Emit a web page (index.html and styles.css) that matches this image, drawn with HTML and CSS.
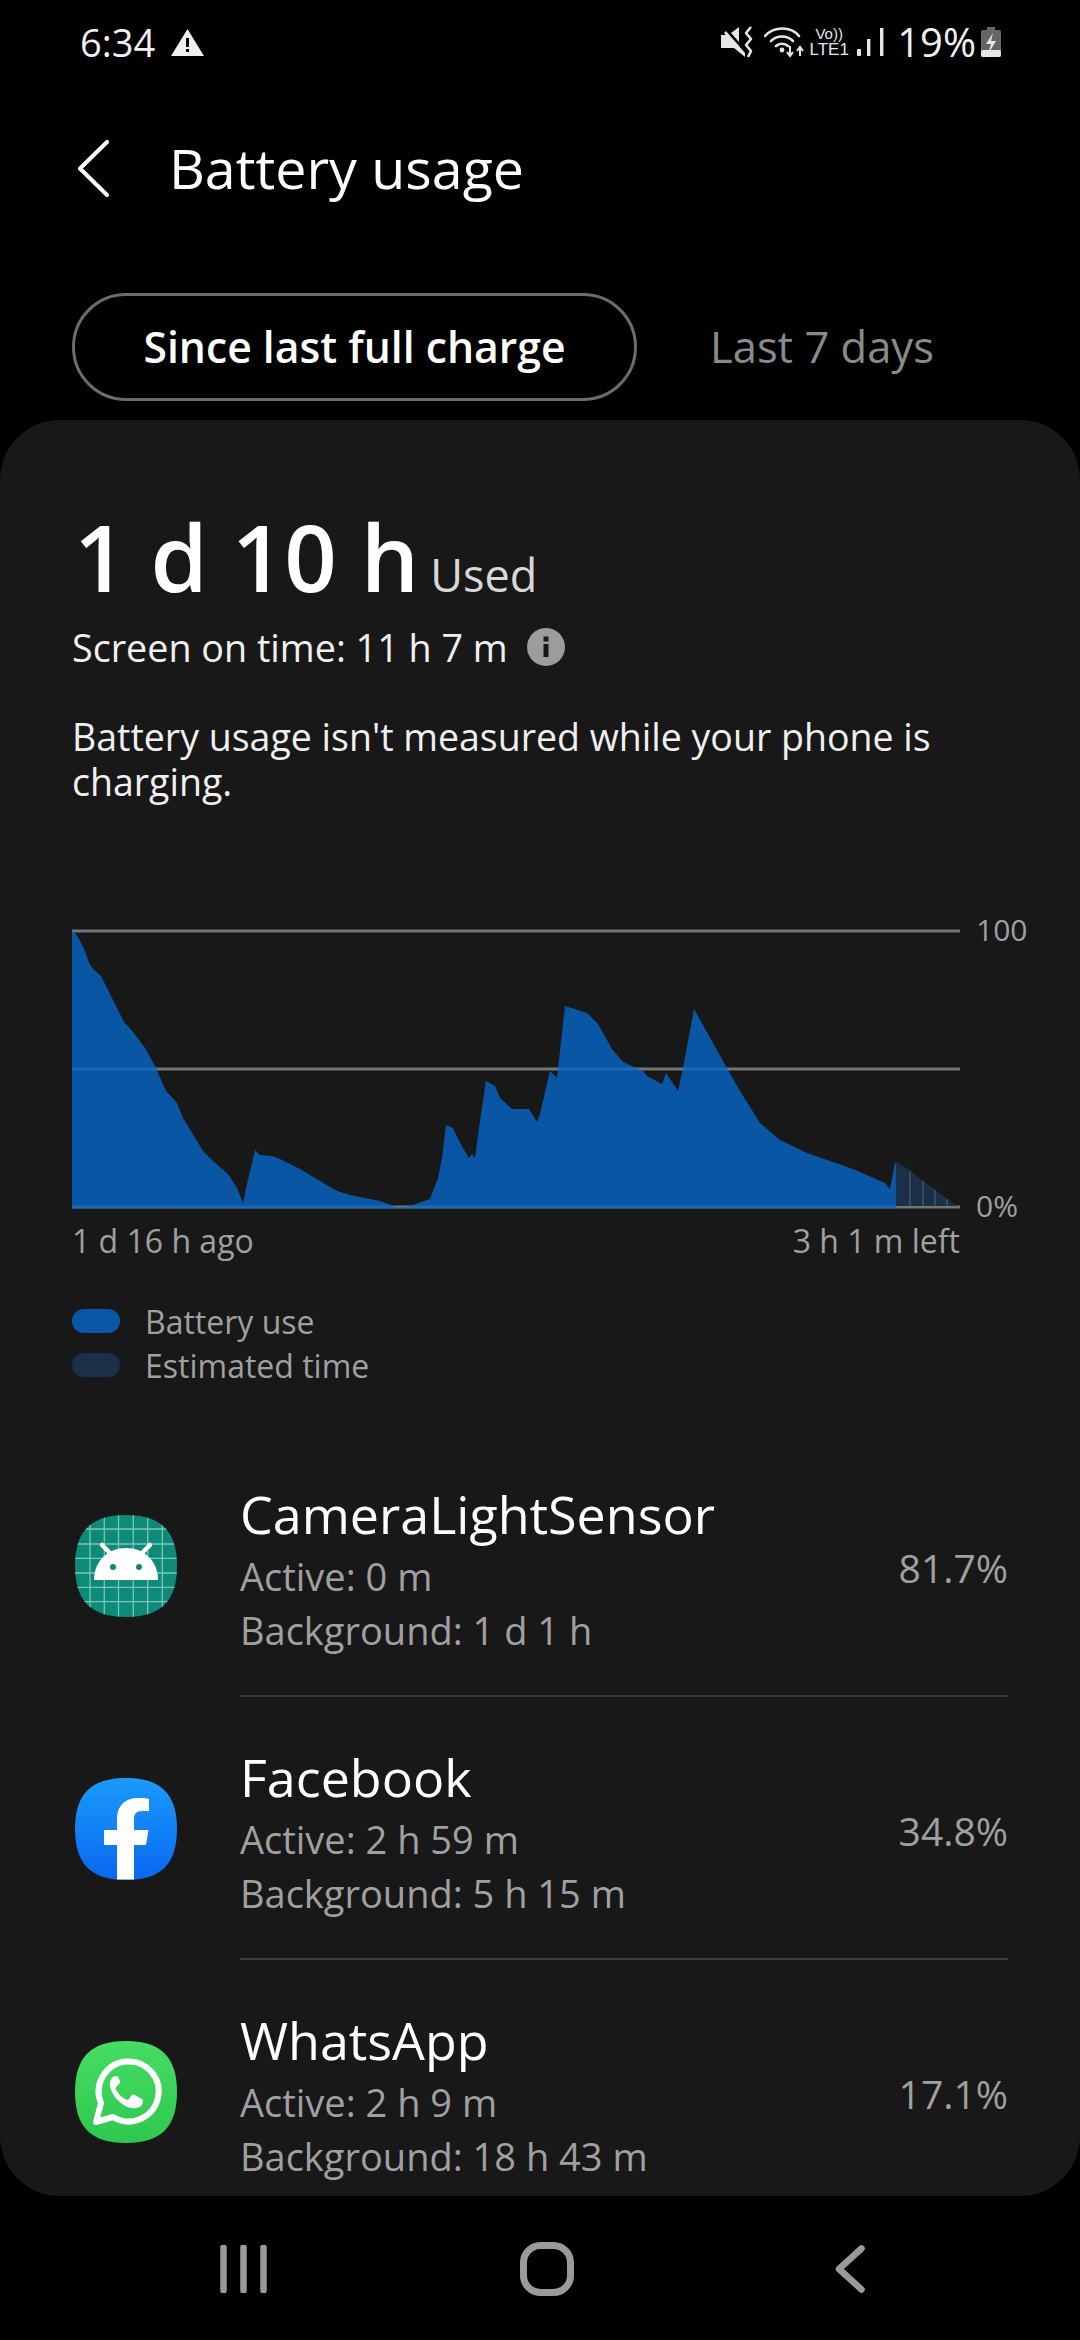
FILE: index.html
```html
<!DOCTYPE html>
<html lang="en">
<head>
<meta charset="utf-8">
<title>Battery usage</title>
<link rel="stylesheet" href="styles.css">
</head>
<body>
<div class="screen">
  <header class="status">
    <div class="status-left">
      <span class="time">6:34</span>
      <svg class="warn" viewBox="0 0 33 27"><path d="M16.5 0 L33 27 H0 Z" fill="#f0f0f0"/><rect x="15" y="9" width="3" height="9" fill="#000"/><rect x="15" y="20" width="3" height="3" fill="#000"/></svg>
    </div>
    <div class="status-right">
      <svg class="st-mute" viewBox="0 0 32 32"><path d="M0 9 H5 L3 7 L5 5 L24 26 V31 L13 22 H0 Z M10 7 L18 1 V16 Z" fill="#e6e6e6"/><path d="M2 0 L25 27" stroke="#000" stroke-width="1.5"/><path d="M30 1 L25 7 L30 13 L25 19 L30 25 L27 31" stroke="#e6e6e6" stroke-width="2.6" fill="none" stroke-linejoin="round"/></svg>
      <svg class="st-wifi" viewBox="0 0 42 32"><g fill="none" stroke="#e6e6e6" stroke-width="2.6" stroke-linecap="round"><path d="M1 10 C10 0 27 0 35 10"/><path d="M7 15 C13 9 23 9 29 15"/><path d="M12 20 C15 17 21 17 24 20"/></g><circle cx="18" cy="24" r="2.4" fill="#e6e6e6"/><path d="M26 20 V28 M23 26 L26 30 L29 26 M36 30 V22 M33 25 L36 21 L39 25" stroke="#e6e6e6" stroke-width="2" fill="none"/></svg>
      <div class="st-volte"><span class="vo">Vo))</span><span class="lte">LTE1</span></div>
      <svg class="st-signal" viewBox="0 0 28 28"><rect x="0" y="21" width="4" height="7" rx="1" fill="#e6e6e6"/><rect x="10" y="11" width="3.4" height="17" fill="#e6e6e6"/><rect x="23" y="0" width="3.4" height="28" fill="#e6e6e6"/></svg>
      <span class="pct-batt">19%</span>
      <svg class="st-batt" viewBox="0 0 20 30"><rect x="6" y="0" width="8" height="3" fill="#666"/><rect x="0" y="3" width="20" height="27" rx="2" fill="#666"/><rect x="0" y="23" width="20" height="7" rx="2" fill="#e6e6e6"/><path d="M12 6 L5 17 H10 L7 27 L15 14 H10 Z" fill="#e6e6e6"/></svg>
    </div>
  </header>

  <div class="appbar">
    <svg class="back" viewBox="0 0 32 57"><path d="M30 2 L3 28.5 L30 55" fill="none" stroke="#fff" stroke-width="4" stroke-linecap="round" stroke-linejoin="round"/></svg>
    <h1 class="title">Battery usage</h1>
  </div>

  <nav class="tabs">
    <div class="tab tab-active">Since last full charge</div>
    <div class="tab tab-idle">Last 7 days</div>
  </nav>

  <main class="card">
    <div class="hero"><span class="hero-num">1 d 10 h</span><span class="hero-unit">Used</span></div>
    <div class="screen-on">
      <span>Screen on time: 11 h 7 m</span>
      <svg class="info" viewBox="0 0 38 38"><circle cx="19" cy="19" r="19" fill="#9c9c9c"/><rect x="16.5" y="16" width="5" height="13" fill="#181818"/><rect x="16.5" y="8.5" width="5" height="5" fill="#181818"/></svg>
    </div>
    <p class="note">Battery usage isn't measured while your phone is charging.</p>

    <div class="chart">
      <svg class="plot" viewBox="72 928 888 280">
        <line x1="72" y1="930" x2="960" y2="930" class="grid"/>
        <line x1="72" y1="1068" x2="960" y2="1068" class="grid"/>
        <line x1="72" y1="1206" x2="960" y2="1206" class="grid"/>
        <path class="est" d="M896 1162 L899 1162 L957 1205 L896 1205 Z"/>
        <g class="est-lines"><line x1="910" y1="1170" x2="910" y2="1205"/><line x1="923" y1="1180" x2="923" y2="1205"/><line x1="935" y1="1189" x2="935" y2="1205"/><line x1="947" y1="1198" x2="947" y2="1205"/></g>
        <path class="use" d="M72 930 L76 933 L80 940 L85 950 L89 962 L93 968 L101 975 L107 987 L115 1003 L124 1021 L133 1031 L145 1047 L155 1065 L166 1090 L177 1102 L183 1117 L203 1150 L213 1160 L228 1173 L237 1187 L243 1202 L247 1183 L255 1149 L260 1154 L272 1155 L280 1158 L300 1168 L320 1180 L337 1190 L350 1194 L380 1200 L397 1206 L407 1206 L430 1198 L438 1177 L442 1157 L446 1124 L453 1127 L457 1136 L463 1147 L469 1157 L472 1153 L475 1157 L480 1120 L486 1080 L495 1085 L500 1097 L512 1108 L529 1108 L537 1121 L540 1113 L550 1070 L557 1077 L565 1005 L587 1012 L598 1023 L612 1048 L623 1061 L643 1070 L647 1075 L662 1083 L666 1072 L678 1090 L683 1067 L694 1008 L723 1060 L740 1090 L760 1122 L780 1139 L807 1152 L853 1168 L885 1182 L890 1188 L895 1162 L896 1162 L896 1207.5 L72 1207.5 Z"/>
      </svg>
      <div class="yaxis"><span>100</span><span>0%</span></div>
    </div>
    <div class="xaxis"><span>1 d 16 h ago</span><span>3 h 1 m left</span></div>

    <ul class="legend">
      <li><i class="swatch swatch-use"></i>Battery use</li>
      <li><i class="swatch swatch-est"></i>Estimated time</li>
    </ul>

    <div class="row">
      <svg class="app" viewBox="0 0 102 102">
        <defs><clipPath id="sq"><path d="M51 0 C86 0 102 16 102 51 C102 86 86 102 51 102 C16 102 0 86 0 51 C0 16 16 0 51 0Z"/></clipPath></defs>
        <g clip-path="url(#sq)">
          <rect width="102" height="102" fill="#0e8a78"/>
          <g stroke="#7cc5ba" stroke-width="1.3"><path d="M15 0 V102 M29.300 0 V102 M43.500 0 V102 M58.300 0 V102 M72.700 0 V102 M87.300 0 V102 M0 14 H102 M0 29 H102 M0 43.300 H102 M0 58 H102 M0 72.300 H102 M0 86.700 H102"/></g>
        </g>
        <path d="M19 65 C19 46 33 33 51 33 C69 33 83 46 83 65 Z" fill="#fff"/>
        <path d="M27 30 L38 41 M75 30 L64 41" stroke="#fff" stroke-width="4.500" stroke-linecap="round"/>
        <circle cx="38" cy="52" r="3" fill="#0e8a78"/><circle cx="64" cy="52" r="3" fill="#0e8a78"/>
      </svg>
      <div class="row-body">
        <div class="row-text">
          <div class="app-name">CameraLightSensor</div>
          <div class="app-line">Active: 0 m</div>
          <div class="app-line">Background: 1 d 1 h</div>
        </div>
        <div class="app-pct">81.7%</div>
      </div>
    </div>

    <div class="row">
      <svg class="app" viewBox="0 0 102 102">
        <defs><linearGradient id="fb" x1="0" y1="0" x2="0" y2="1"><stop offset="0" stop-color="#1a9bfb"/><stop offset="1" stop-color="#0a67f0"/></linearGradient></defs>
        <path d="M51 0 C86 0 102 16 102 51 C102 86 86 102 51 102 C16 102 0 86 0 51 C0 16 16 0 51 0Z" fill="url(#fb)"/>
        <path d="M42 101.500 V67 H29 V52 H42 V41 C42 27 51 20 63 20 C68 20 72 20 74 21 V33 H67 C61 33 59 36 59 41 V52 H73.500 L71 67 H59 V101.500 Z" fill="#fff"/>
      </svg>
      <div class="row-body">
        <div class="row-text">
          <div class="app-name">Facebook</div>
          <div class="app-line">Active: 2 h 59 m</div>
          <div class="app-line">Background: 5 h 15 m</div>
        </div>
        <div class="app-pct">34.8%</div>
      </div>
    </div>

    <div class="row">
      <svg class="app" viewBox="0 0 102 102">
        <defs><linearGradient id="wa" x1="0" y1="0" x2="0" y2="1"><stop offset="0" stop-color="#46dc64"/><stop offset="1" stop-color="#2ec84e"/></linearGradient></defs>
        <path d="M51 0 C86 0 102 16 102 51 C102 86 86 102 51 102 C16 102 0 86 0 51 C0 16 16 0 51 0Z" fill="url(#wa)"/>
        <path d="M21 81 L26 62 A 30 30 0 1 1 38 76 Z" fill="none" stroke="#fff" stroke-width="6" stroke-linejoin="round"/>
        <path d="M41 35 C38 35 35 38 35 43 C35 50 40 57 46 62 C52 67 58 68 62 67 C66 66 68 63 68 60 C68 58 67 58 65 57 L60 54 C58 53 57 54 56 55 L54 58 C53 59 52 59 50 58 C46 56 43 52 41 49 C40 47 41 46 42 45 L44 43 C45 42 45 41 45 40 L43 36 C42.500 35 42 35 41 35Z" fill="#fff"/>
      </svg>
      <div class="row-body">
        <div class="row-text">
          <div class="app-name">WhatsApp</div>
          <div class="app-line">Active: 2 h 9 m</div>
          <div class="app-line">Background: 18 h 43 m</div>
        </div>
        <div class="app-pct">17.1%</div>
      </div>
    </div>
  </main>

  <footer class="navbar">
    <svg class="nav-recents" viewBox="0 0 48 48"><path d="M3.500 2.500 V45.500 M23.500 2.500 V45.500 M43.500 2.500 V45.500" stroke="#9a9a9a" stroke-width="6.500" stroke-linecap="round"/></svg>
    <svg class="nav-home" viewBox="0 0 54 54"><rect x="3.500" y="3.500" width="47" height="47" rx="17" fill="none" stroke="#9a9a9a" stroke-width="7"/></svg>
    <svg class="nav-back" viewBox="0 0 30 48"><path d="M26.500 3.500 L4 24 L26.500 44.500" fill="none" stroke="#9a9a9a" stroke-width="6.500" stroke-linecap="round" stroke-linejoin="round"/></svg>
  </footer>
</div>
</body>
</html>
```

FILE: styles.css
```css
* { box-sizing: border-box; }
html, body { margin: 0; padding: 0; background: #000; }
body { font-family: "Open Sans", "Noto Sans", "Liberation Sans", sans-serif; color: #fff; }
.screen { width: 1080px; height: 2340px; display: flex; flex-direction: column; overflow: hidden; background: #000; }

.status { height: 84px; padding: 0 80px 0 80px; display: flex; align-items: center; justify-content: space-between; flex: none; }
.status-left { display: flex; align-items: center; gap: 16px; }
.time { font-size: 38px; color: #f0f0f0; line-height: 40px; }
.warn { width: 33px; height: 27px; }
.status-right { display: flex; align-items: center; margin-right: -1px; }
.st-mute { width: 32px; height: 32px; margin-right: 11px; }
.st-wifi { width: 42px; height: 32px; }
.st-volte { display: flex; flex-direction: column; align-items: center; width: 44px; margin-left: 1px; font-size: 17px; line-height: 17px; color: #e6e6e6; font-family: "Liberation Sans", sans-serif; }
.vo { font-size: 15px; line-height: 15px; }
.st-signal { width: 28px; height: 28px; margin: 0 12px 0 6px; }
.pct-batt { font-size: 40px; line-height: 40px; color: #f0f0f0; margin-right: 5px; }
.st-batt { width: 20px; height: 30px; }

.appbar { height: 168px; display: flex; align-items: center; padding-left: 77px; flex: none; }
.back { width: 32px; height: 57px; margin-right: 60px; }
.title { font-size: 55.5px; font-weight: 400; margin: 0; line-height: 60px; }

.tabs { display: flex; align-items: center; padding-left: 72px; height: 108px; margin-top: 41px; flex: none; }
.tab { line-height: 50px; }
.tab-active { width: 565px; height: 108px; border: 3px solid #6c6c6c; border-radius: 54px; display: flex; align-items: center; justify-content: center; font-size: 42.7px; font-weight: 600; }
.tab-idle { margin-left: 73px; font-size: 43.5px; color: #8a8a8a; }

.card { height: 1776px; margin-top: 19px; flex: none; background: #181818; border-radius: 60px; padding-top: 82px; overflow: hidden; }
.hero { display: flex; align-items: baseline; padding-left: 74px; height: 110px; line-height: 110px; }
.hero-num { font-size: 92px; font-weight: 600; }
.hero-unit { font-size: 45px; color: #d8d8d8; margin-left: 11px; }
.screen-on { display: flex; align-items: center; padding-left: 72px; margin-top: 10px; height: 50px; font-size: 37.7px; color: #f0f0f0; }
.info { width: 38px; height: 38px; margin-left: 19px; }
.note { margin: 42px 72px 0; font-size: 37.5px; line-height: 45px; color: #f0f0f0; height: 90px; }

.chart { display: flex; padding-left: 72px; margin-top: 125px; height: 280px; }
.plot { width: 888px; height: 280px; flex: none; display: block; }
.grid { stroke: #757575; stroke-width: 3; }
.use { fill: #0668c8; fill-opacity: 0.8; }
.est { fill: #1b2f49; }
.est-lines line { stroke: #3a4a5e; stroke-width: 2; }
.yaxis { display: flex; flex-direction: column; justify-content: space-between; padding-left: 16px; font-size: 30px; line-height: 40px; height: 316px; margin-top: -19px; color: #a0a0a0; }

.xaxis { display: flex; justify-content: space-between; width: 888px; margin-left: 72px; margin-top: 12px; font-size: 32px; line-height: 40px; color: #a0a0a0; }

.legend { list-style: none; margin: 38px 0 47px 72px; padding: 0; font-size: 32px; color: #a0a0a0; }
.legend li { display: flex; align-items: center; height: 44px; }
.swatch { width: 48px; height: 24px; border-radius: 12px; margin-right: 25px; }
.swatch-use { background: #0a58a5; }
.swatch-est { background: #1b2f49; }

.row { display: flex; align-items: center; height: 263px; padding-left: 75px; }
.app { width: 102px; height: 102px; flex: none; margin-right: 63px; }
.row-body { flex: 1; height: 263px; margin-right: 72px; border-bottom: 2px solid #3a3a3a; display: flex; align-items: center; justify-content: space-between; }
.row-text { padding-top: 7px; }
.app-name { font-size: 52px; line-height: 70px; color: #fff; }
.app-line { font-size: 38px; line-height: 54px; color: #a0a0a0; }
.app-pct { font-size: 39px; color: #a0a0a0; margin-top: 5px; }

.navbar { flex: 1; display: flex; align-items: center; padding-left: 220px; }
.nav-recents { width: 48px; height: 48px; margin-right: 252px; margin-top: 2px; }
.nav-home { width: 54px; height: 54px; margin-right: 261px; margin-top: 2px; }
.nav-back { width: 30px; height: 48px; margin-top: 2px; }
```
